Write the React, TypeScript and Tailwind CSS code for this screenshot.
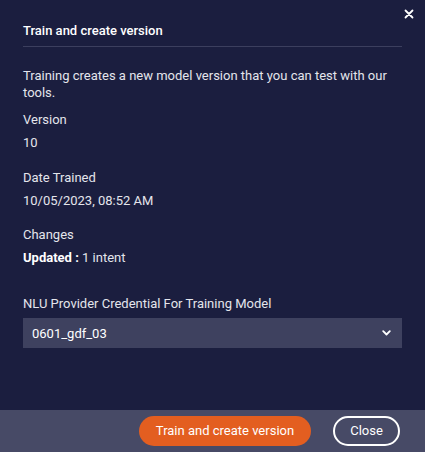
export default function App() {
  return (
    <div className="relative flex h-[452px] w-[425px] flex-col bg-[#1b1e3f] text-white font-['Roboto',sans-serif]">
      {/* close */}
      <button className="absolute right-[11px] top-[9px] text-white">
        <svg width="10" height="10" viewBox="0 0 10 10" fill="none">
          <path d="M1.5 1.5L8.5 8.5M8.5 1.5L1.5 8.5" stroke="white" strokeWidth="1.8" strokeLinecap="round" />
        </svg>
      </button>

      <div className="flex-1 px-[23px] pt-[23px]">
        <h2 className="border-b border-[#3c3f5e] pb-[7px] text-[13px] font-medium leading-[16px]">
          Train and create version
        </h2>

        <p className="mt-[20px] text-[13px] leading-[17px] text-[#e4e5ec]">
          Training creates a new model version that you can test with our tools.
        </p>

        <div className="mt-[10px] text-[13px] leading-[17px] text-[#e4e5ec]">
          <p>Version</p>
          <p className="mt-[6px]">10</p>
        </div>

        <div className="mt-[18px] text-[13px] leading-[17px] text-[#e4e5ec]">
          <p>Date Trained</p>
          <p className="mt-[6px]">10/05/2023, 08:52 AM</p>
        </div>

        <div className="mt-[17px] text-[13px] leading-[17px] text-[#e4e5ec]">
          <p>Changes</p>
          <p className="mt-[6px]">
            <span className="font-bold text-white">Updated :</span> 1 intent
          </p>
        </div>

        <div className="mt-[29px] text-[13px] leading-[17px] text-[#e4e5ec]">
          <p>NLU Provider Credential For Training Model</p>
          <div className="mt-[6px] flex h-[30px] items-center justify-between bg-[#3e415f] pl-[9px] pr-[11px]">
            <span className="text-white">0601_gdf_03</span>
            <svg width="9" height="6" viewBox="0 0 9 6" fill="none">
              <path d="M1.2 1.2L4.5 4.5L7.8 1.2" stroke="white" strokeWidth="1.8" strokeLinecap="round" strokeLinejoin="round" />
            </svg>
          </div>
        </div>
      </div>

      <div className="flex h-[42px] items-center justify-end gap-[22px] bg-[#474a66] pr-[25px]">
        <button className="h-[30px] w-[172px] rounded-full bg-[#e35e20] text-[13px] text-white">
          Train and create version
        </button>
        <button className="h-[30px] w-[67px] rounded-full border-2 border-white text-[13px] text-white">
          Close
        </button>
      </div>
    </div>
  );
}
